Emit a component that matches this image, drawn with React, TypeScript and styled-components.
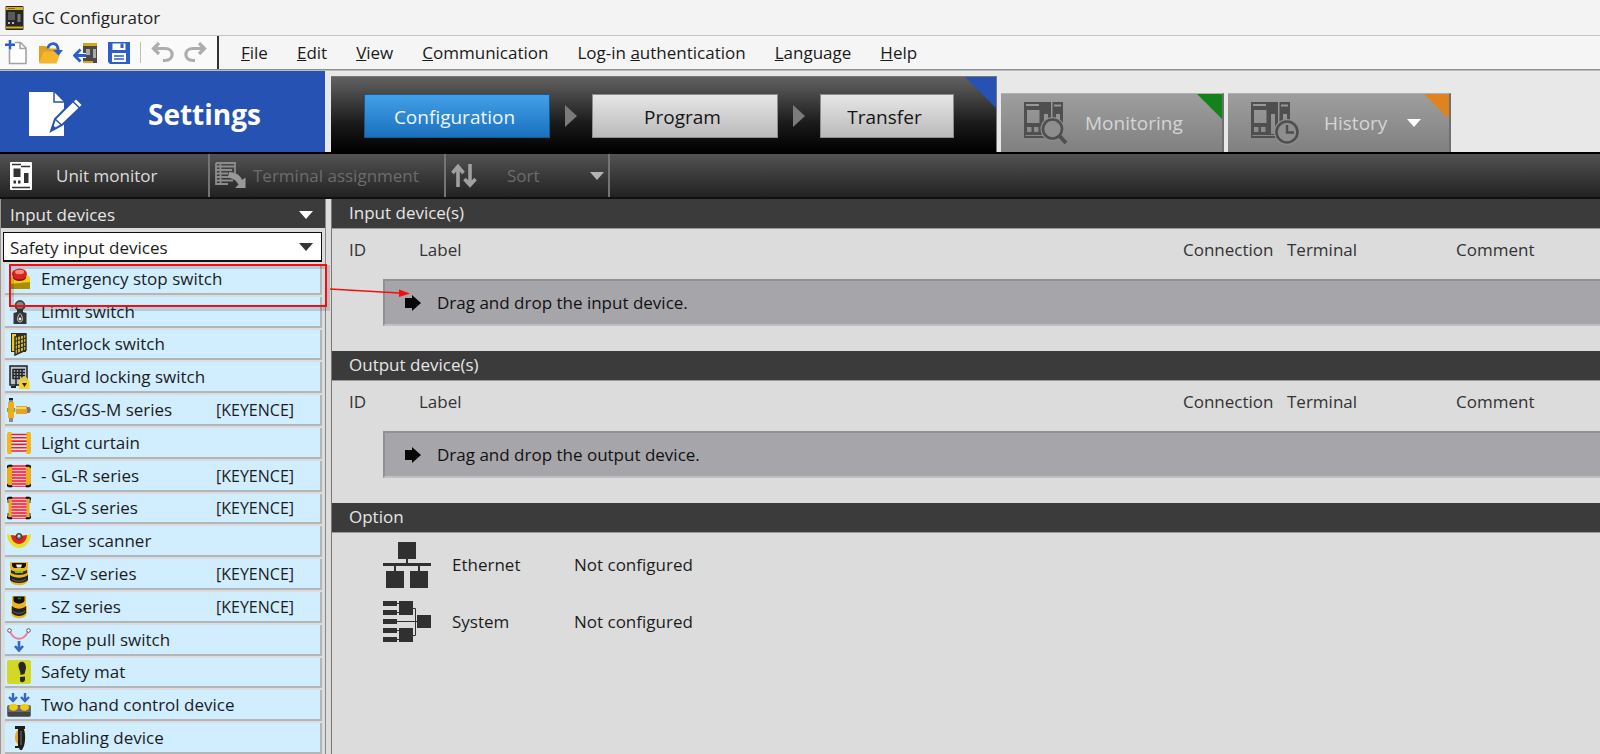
import React from "react";
import styled, { createGlobalStyle } from "styled-components";

const GlobalStyle = createGlobalStyle`
  *, *::before, *::after { box-sizing: border-box; }
  body {
    margin: 0;
    background: #dcdcdc;
    color: #1c1c1c;
    font-family: "Open Sans", "Noto Sans", sans-serif;
    font-size: 17px;
    line-height: 24px;
  }
  button, select { font: inherit; color: inherit; margin: 0; border: 0; border-radius: 0; padding: 0; background: none; }
  svg { display: block; flex: none; }
  ul { list-style: none; margin: 0; padding: 0; }
  h1, h2 { margin: 0; font: inherit; }
`;

const Shell = styled.div`
  min-height: 100vh;
  display: flex;
  flex-direction: column;
`;

const TitleBar = styled.header`
  display: flex;
  align-items: center;
  gap: 8px;
  height: 35px;
  padding-left: 5px;
  background: #f3f3f3;
  color: #222;
`;

const MenuBar = styled.div`
  display: flex;
  height: 35px;
  background: #f5f5f5;
  border-top: 1px solid #c4c4c4;
  border-bottom: 1px solid #8e8e8e;
`;

const QuickTools = styled.div`
  display: flex;
  align-items: center;
  width: 219px;
  padding-left: 5px;
  gap: 10px;
  border-right: 2px solid #333;
  background: #fafafa;
`;

const QuickDivider = styled.span`
  width: 1px;
  height: 21px;
  background: #bdbdbd;
`;

const Menu = styled.nav`
  display: flex;
  align-items: center;
  gap: 29px;
  padding-left: 22px;
  color: #1a1a1a;
`;

const Header = styled.div`
  display: flex;
  align-items: flex-end;
  height: 84px;
  background: #e8e8e8;
  border-top: 1px solid #bbb;
  border-bottom: 2px solid #000;
`;

const ModeTitle = styled.h1`
  display: flex;
  align-items: center;
  gap: 64px;
  align-self: stretch;
  width: 325px;
  padding: 4px 0 0 29px;
  background: #2652b3;
  color: #fff;
  font-size: 28px;
  font-weight: 700;
`;

const corner = (color: string, size: number) => `
  &::after {
    content: "";
    position: absolute;
    top: 0;
    right: 0;
    width: ${size}px;
    height: ${size}px;
    background: ${color};
    clip-path: polygon(0 0, 100% 0, 100% 100%);
  }
`;

const Steps = styled.nav`
  position: relative;
  display: flex;
  align-items: center;
  gap: 15px;
  height: 76px;
  width: 666px;
  margin-left: 6px;
  padding: 3px 0 0 33px;
  background: linear-gradient(#626262, #1a1a1a 62%, #000);
  border-right: 1px solid #777;
  border-top: 1px solid #777;
  ${corner("#2652b3", 31)}
`;

const StepButton = styled.button<{ $active?: boolean; $width: number }>`
  width: ${(p) => p.$width}px;
  height: 44px;
  padding: 2px 5px 0 0;
  border: 1px solid ${(p) => (p.$active ? "#17598f" : "#8d8d8d")};
  background: ${(p) => (p.$active ? "linear-gradient(#43a0e8, #1a70bd)" : "linear-gradient(#e6e6e6, #bababa)")};
  color: ${(p) => (p.$active ? "#eef6fd" : "#151515")};
  font-size: 19px;
`;

const ModeTab = styled.button<{ $color: string }>`
  position: relative;
  display: flex;
  align-items: center;
  height: 59px;
  width: 223px;
  margin-left: 4px;
  padding-left: 23px;
  background: linear-gradient(#9e9e9e, #808080);
  border-right: 2px solid #6f6f6f;
  border-top: 1px solid #b0b0b0;
  color: #d2d6d8;
  font-size: 19px;
  ${(p) => corner(p.$color, 25)}
`;

const TabLabel = styled.span<{ $indent: number }>`
  margin-left: ${(p) => p.$indent}px;
  margin-right: 20px;
`;

const ToolBar = styled.div`
  display: flex;
  height: 45px;
  background: linear-gradient(#525252, #222);
  border-bottom: 2px solid #111;
`;

const ToolButton = styled.button<{ $width: number; $gap: number }>`
  display: flex;
  align-items: center;
  gap: ${(p) => p.$gap}px;
  width: ${(p) => p.$width}px;
  padding: 0 4px 0 5px;
  border-right: 2px solid #747474;
  color: #dcdcdc;
  &:first-child { padding-left: 10px; }
  &:disabled { color: #6c6c6c; }
`;

const ToolLabel = styled.span`
  flex: 1;
  text-align: left;
`;

const Workspace = styled.div`
  flex: 1;
  display: flex;
`;

const DevicePanel = styled.aside`
  display: flex;
  flex-direction: column;
  width: 326px;
  border-right: 1px solid #888;
  border-left: 1px solid #999;
`;

const PanelHeader = styled.button`
  display: flex;
  align-items: center;
  justify-content: space-between;
  height: 29px;
  padding: 2px 12px 0 9px;
  background: #3b3b3b;
  color: #e6e6e6;
`;

const CategoryField = styled.label`
  position: relative;
  display: block;
  margin: 4px 3px 0 2px;
  svg { position: absolute; right: 9px; top: 11px; pointer-events: none; }
`;

const CategorySelect = styled.select`
  display: block;
  appearance: none;
  width: 100%;
  height: 30px;
  padding: 2px 28px 0 6px;
  border: 1px solid #111;
  border-bottom-width: 2px;
  background: #fff;
  color: #1c1c1c;
`;

const DeviceList = styled.ul`
  flex: 1;
  display: grid;
  grid-auto-rows: minmax(32px, 1fr);
  margin: 0 3px 0 4px;
`;

const DeviceItem = styled.li`
  position: relative;
  display: flex;
  align-items: stretch;
  padding-top: 2px;
`;

const DeviceButton = styled.button`
  flex: 1;
  display: grid;
  grid-template-columns: 24px 174px 1fr;
  column-gap: 10px;
  align-items: center;
  padding: 1px 0 0 2px;
  background: #d0eeff;
  border-right: 2px solid #b0b6ba;
  border-bottom: 2px solid #b0b6ba;
  text-align: left;
  white-space: nowrap;
`;

const Maker = styled.span`
  font-size: 16px;
  margin-left: -9px;
`;

const Callout = styled.svg`
  position: absolute;
  left: 0;
  top: 0;
  z-index: 2;
  pointer-events: none;
`;

const Main = styled.main`
  flex: 1;
  margin-left: 5px;
  border-left: 1px solid #777;
  background: #dcdcdc;
`;

const SectionTitle = styled.h2`
  height: 30px;
  padding: 2px 0 0 17px;
  background: #3b3b3b;
  border-bottom: 1px solid #999;
  color: #e6e6e6;
`;

const DeviceTable = styled.table`
  width: 100%;
  table-layout: fixed;
  border-collapse: collapse;
  margin-bottom: 25px;
  th { height: 50px; padding: 0 0 8px; font-weight: 400; text-align: left; color: #333; }
  th:first-child { padding-left: 17px; }
  td { padding: 0 0 0 51px; }
`;

const DropZone = styled.div`
  display: flex;
  align-items: center;
  gap: 16px;
  height: 47px;
  padding-left: 20px;
  background: #a6a5aa;
  border-top: 2px solid #919195;
  border-left: 2px solid #919195;
  border-bottom: 2px solid #c0c0c2;
  color: #111;
`;

const OptionList = styled.ul`
  padding: 3px 0 0 51px;
`;

const OptionItem = styled.li`
  display: grid;
  grid-template-columns: 48px 101px 1fr;
  column-gap: 21px;
  align-items: center;
  height: 57px;
`;

const Down = ({ color, w = 14, h = 8 }: { color: string; w?: number; h?: number }) => (
  <svg width={w} height={h} viewBox="0 0 14 8" aria-hidden="true"><path d="M0 0H14L7 8Z" fill={color} /></svg>
);

const StepArrow = () => (
  <svg width="12" height="22" viewBox="0 0 12 22" aria-hidden="true"><path d="M0 0L12 11L0 22Z" fill="#7b7b7b" /></svg>
);

const AppIcon = () => (
  <svg width="19" height="24" viewBox="0 0 19 24" aria-hidden="true">
    <rect x=".5" width="18" height="24" rx="1" fill="#262626" />
    <path d="M1 1H18V4H1ZM1 20.500H18V22.500H1Z" fill="#d4b01c" />
    <path d="M3 2.500H10" stroke="#7a6a20" />
    <rect x="3" y="6" width="7" height="8" fill="#5a5a5a" />
    <rect x="12.500" y="8" width="3" height="8" fill="#777" />
    <path d="M3 17H5M7 17H9" stroke="#bbb" strokeWidth="2" />
  </svg>
);

const NewIcon = () => (
  <svg width="23" height="25" viewBox="0 0 23 25" fill="none" aria-hidden="true">
    <path d="M4.500 10V23.500H21V8L15.500 2.500H10M15 3V8.500H21" stroke="#a3a3a3" strokeWidth="1.600" fill="#fff" />
    <path d="M5 0V9.500M0 4.800H10" stroke="#2a5fcb" strokeWidth="2.600" />
  </svg>
);

const OpenIcon = () => (
  <svg width="25" height="22" viewBox="0 0 25 22" fill="none" aria-hidden="true">
    <path d="M1 4H8L10 6.500H20V10H6L2 20H1Z" fill="#e3a01d" />
    <path d="M6 9.500H23L18.500 21.500H1Z" fill="#f3b62c" />
    <path d="M10 6.500C10.500 .5 20 -1.500 20.300 9" stroke="#2a5fcb" strokeWidth="2.800" />
    <path d="M15 8L20.500 13.500L25 8Z" fill="#2a5fcb" />
  </svg>
);

const ReadIcon = () => (
  <svg width="25" height="22" viewBox="0 0 25 22" fill="none" aria-hidden="true">
    <rect x="10" y="1" width="14" height="20" fill="#4a4a4a" />
    <path d="M10 1H24V4H10ZM10 19H20V21H10Z" fill="#d6a81c" />
    <path d="M13 7H17V13H13ZM20 7H23V16H20Z" fill="#aaa" />
    <path d="M2 13.500H13" stroke="#fff" strokeWidth="5" />
    <path d="M2 13.500H13M7.500 7.500L1.500 13.500L7.500 19.500" stroke="#2a5fcb" strokeWidth="2.800" />
  </svg>
);

const SaveIcon = () => (
  <svg width="22" height="22" viewBox="0 0 22 22" aria-hidden="true">
    <path d="M0 0H22V22H2L0 20Z" fill="#2c5fc9" />
    <path d="M4.500 1.500H17.500V8H4.500ZM4 11H18V20H4Z" fill="#fff" />
    <path d="M12.500 1.500H15.500V6H12.500Z" fill="#2c5fc9" />
    <path d="M6 14H16M6 17H16" stroke="#2c5fc9" strokeWidth="1.500" />
  </svg>
);

const UndoIcon = ({ flip }: { flip?: boolean }) => (
  <svg width="23" height="21" viewBox="0 0 23 21" fill="none" aria-hidden="true">
    <g transform={flip ? "matrix(-1 0 0 1 23 0)" : undefined} stroke="#adadad" strokeWidth="3.200">
      <path d="M8 1L2.500 6.500L8 12M3 6.500H14C23.500 6.500 23.500 18.500 14 18.500H12" />
    </g>
  </svg>
);

const SettingsIcon = () => (
  <svg width="55" height="44" viewBox="0 0 55 44" aria-hidden="true">
    <path d="M0 0H25L35 10V44H0Z" fill="#fff" />
    <path d="M25 0V10H35" fill="none" stroke="#2652b3" strokeWidth="1.500" />
    <path d="M22 39L26 27L47 6L54 13L33 33Z" fill="#fff" stroke="#2652b3" strokeWidth="2" />
    <path d="M44 9.500L50.500 16M26 27L33 33.500" stroke="#2652b3" strokeWidth="1.500" />
    <path d="M22 39L24 33L27.500 36.500Z" fill="#2652b3" />
  </svg>
);

const UnitIcon = () => (
  <svg width="22" height="28" viewBox="0 0 22 28" aria-hidden="true">
    <rect width="22" height="28" rx="1" fill="#fff" />
    <path d="M2 2.500H11M2 25.500H20" stroke="#333" strokeWidth="1.500" />
    <path d="M3.500 6.500H10.500V15H3.500ZM14 11H18.500V21H14ZM3.500 18.500H6V21.500H3.500ZM8 18.500H10.500V21.500H8Z" fill="#333" />
    <path d="M11 4.500H20" stroke="#333" strokeWidth="1.500" />
  </svg>
);

const TerminalIcon = () => (
  <svg width="31" height="27" viewBox="0 0 31 27" fill="none" aria-hidden="true">
    <path d="M1 1H20V11M1 1V22H13M5.500 1V22M1 4.500H20M1 8H17M1 11.500H13M1 15H14M1 18.500H18" stroke="#8c8c8c" strokeWidth="1.800" />
    <path d="M14 10C21 10 26 14 27 18L30.500 15.500V26H20L23.500 22.500C21 18 18 16.500 13 15.500Z" fill="#999" />
  </svg>
);

const SortIcon = () => (
  <svg width="26" height="24" viewBox="0 0 26 24" fill="none" stroke="#a0a0a0" strokeWidth="3.600" aria-hidden="true">
    <path d="M7 23V3M1.500 9L7 2.500L12.500 9M19 0V20M13.500 15L19 21L24.500 15" />
  </svg>
);

const ModuleShape = () => (
  <path fillRule="evenodd" d="M0 0H27V36H0ZM28.500 0H39V26H28.500ZM2 2V4H15V2ZM3 8V21H15.500V8ZM3 25V30H7.500V25ZM10 25V30H14.500V25ZM20 12V32H24V12ZM30 2.500V4.500H37V2.500ZM32 12V22H36V12ZM1.500 33V34H24V33Z" fill="#4f4f4f" />
);

const MonitorIcon = () => (
  <svg width="44" height="43" viewBox="0 0 44 43" fill="none" aria-hidden="true">
    <ModuleShape />
    <circle cx="28.500" cy="27" r="12" fill="#8e8e8e" />
    <circle cx="28.500" cy="27" r="9.500" stroke="#4f4f4f" strokeWidth="2.600" />
    <path d="M35.500 34L42 41" stroke="#4f4f4f" strokeWidth="4" />
  </svg>
);

const HistoryIcon = () => (
  <svg width="49" height="43" viewBox="0 0 49 43" fill="none" aria-hidden="true">
    <ModuleShape />
    <circle cx="36" cy="30" r="13" fill="#8e8e8e" />
    <circle cx="36" cy="30" r="10.500" stroke="#4f4f4f" strokeWidth="2.600" />
    <path d="M36 23V30.500H43" stroke="#4f4f4f" strokeWidth="2.400" />
  </svg>
);

const DropArrow = () => (
  <svg width="16" height="16" viewBox="0 0 16 16" aria-hidden="true"><path d="M0 3H7V0L16 8L7 16V13H0Z" fill="#060606" /></svg>
);

const EthernetIcon = () => (
  <svg width="48" height="46" viewBox="0 0 48 46" fill="#303030" aria-hidden="true">
    <path d="M15 0H33V17H25V21H48V24H37V29H45V46H27V29H35V24H13V29H21V46H3V29H11V24H0V21H23V17H15Z" />
  </svg>
);

const SystemIcon = () => (
  <svg width="48" height="42" viewBox="0 0 48 42" aria-hidden="true">
    <path d="M0 0H14V5H0ZM0 9H14V14H0ZM0 18H14V23H0ZM0 27H14V32H0ZM0 36H14V41H0ZM16 0H30V14H16ZM16 27H30V41H16ZM34 14H48V27H34Z" fill="#303030" />
    <path d="M14 2.500H16M14 11.500H16M14 20.500H34M14 29.500H16M14 38.500H16M30 7.500H32.500V34.500H30" fill="none" stroke="#303030" />
  </svg>
);

const LightCurtain = () => (
  <>
    <path d="M4 3H20V21H4Z" fill="#fdeef2" />
    <path d="M4 3.500H20M4 6.800H20M4 10.100H20M4 13.400H20M4 16.700H20M4 20H20" stroke="#ec1c2a" strokeWidth="1.600" />
    <path d="M1 1H4.500V23H1L0 21V3ZM23 1H19.500V23H23L24 21V3Z" fill="#f7b519" />
  </>
);

const SeriesCurtain = ({ slim }: { slim?: boolean }) => (
  <>
    <path d="M4 1H20V23H4Z" fill="#f04452" />
    <path d="M4 3.500H20M4 6.500H20M4 9.500H20M4 12.500H20M4 15.500H20M4 18.500H20M4 21.500H20" stroke="#f9bcc6" strokeWidth="1.200" />
    <path d={slim ? "M1.500 2H4.500V22H1.500ZM19.500 2H22.500V22H19.500Z" : "M0 2H5V22H0ZM19 2H24V22H19Z"} fill="#f2ab18" />
    <path d="M0 4V2L2 1H5V2.500H2ZM24 4V2L22 1H19V2.500H22ZM0 20V22L2 23H5V21.500H2ZM24 20V22L22 23H19V21.500H22Z" fill="#111" stroke="#111" strokeWidth=".6" />
    {slim && <path d="M1 4V7M23 4V7M1 17V20M23 17V20" stroke="#333" />}
  </>
);

const icons: Record<string, React.ReactNode> = {
  stop: (
    <>
      <path d="M4 10L7 8H20L23 10V22H3V14Z" fill="#f1cf10" />
      <path d="M3 17L23 15V22H3Z" fill="#a98f08" />
      <ellipse cx="12.500" cy="10.500" rx="6.500" ry="3.500" fill="#7e1212" />
      <ellipse cx="12.500" cy="7" rx="7.500" ry="5.500" fill="#dd231d" />
      <ellipse cx="12.500" cy="5" rx="4.500" ry="2.200" fill="#f58a80" />
    </>
  ),
  limit: (
    <>
      <circle cx="13" cy="5.500" r="4.500" fill="#888" stroke="#444" strokeWidth="1.800" />
      <path d="M10 9H16V12L19.500 13V24H6.500V13L10 12Z" fill="#353535" />
      <path d="M13 13.500C16 16 16.500 22 13 22C9.500 22 10 16 13 13.500" fill="none" stroke="#ccc" />
      <circle cx="13" cy="19" r="1.400" fill="#eee" />
    </>
  ),
  interlock: (
    <>
      <path d="M4 1H19V20H4Z" fill="#2e2e2e" />
      <path d="M5 2H9V19H5Z" fill="#f2c81b" />
      <path d="M8 5L19 2V18L8 23Z" fill="#f2c81b" stroke="#2e2e2e" strokeWidth="1.500" />
      <path d="M10.500 4V22M13.500 3V21M16.500 2V20M8 9.500L19 6M8 13.500L19 10M8 17.500L19 14" stroke="#2e2e2e" strokeWidth="1.300" />
    </>
  ),
  guard: (
    <>
      <path d="M3 1H20V20H3Z" fill="#b8c4ca" stroke="#222" strokeWidth="1.500" />
      <path d="M6 4V14M9 4V21M12 4V14M15 4V13M6 4.500H18M6 7.500H18M6 10.500H18M6 13.500H13" stroke="#222" strokeWidth="1.500" />
      <path d="M4 22H9" stroke="#222" strokeWidth="2" />
      <path d="M14.500 16C14.500 11.500 20 11.500 20 16" fill="none" stroke="#f2c81b" strokeWidth="2" />
      <rect x="12" y="15.500" width="10.500" height="8.500" fill="#f7d21e" />
      <path d="M15 18H20L17.500 22Z" fill="#222" />
    </>
  ),
  gs: (
    <>
      <path d="M1 4H7V20H1Z" fill="#f3ad1c" />
      <path d="M2 0H6V4H2ZM2 20H6V24H2Z" fill="#8c8c8c" />
      <path d="M2 1H6" stroke="#222" strokeWidth="2" />
      <path d="M.500 10V14M7.500 10V14" stroke="#63b82c" strokeWidth="1.500" />
      <path d="M9 8H20V16H9Z" fill="#e7a51c" />
      <path d="M9 10H19" stroke="#f6d27a" strokeWidth="2" />
      <path d="M20 9H22.500L24 12L22.500 15H20Z" fill="#777" />
    </>
  ),
  curtain: <LightCurtain />,
  glr: <SeriesCurtain />,
  gls: <SeriesCurtain slim />,
  laser: (
    <>
      <path d="M0 5C5 7 19 7 24 5C24 13 18 19 12 19C6 19 0 13 0 5Z" fill="#e6e02c" />
      <path d="M4 6C8 7 16 7 20 6C20 11 16 15 12 15C8 15 4 11 4 6Z" fill="#e0231d" />
      <circle cx="12" cy="7.500" r="3" fill="#777" stroke="#333" />
      <circle cx="12" cy="7" r="1.200" fill="#ddd" />
    </>
  ),
  szv: (
    <>
      <path d="M3 0H21V6L20 8H21V18C20 25 4 25 3 18V8H4L3 6Z" fill="#f0b41c" />
      <path d="M5 1H19V4L17 6H7L5 4Z" fill="#111" />
      <path d="M9 2.500H15L14 5.500H10Z" fill="#f4f4f4" />
      <path d="M4 8C8 10.500 16 10.500 20 8V11C16 13.500 8 13.500 4 11Z" fill="#2b2b1b" />
      <path d="M8 10H16" stroke="#6cc52f" strokeWidth="2" />
      <path d="M3 13C8 16.500 16 16.500 21 13V18C18 22 6 22 3 18Z" fill="#222" />
      <path d="M5 17C9 20 15 20 19 17" stroke="#666" fill="none" />
    </>
  ),
  sz: (
    <>
      <path d="M5 1H19V8L18.500 11H20V18C19 25 5 25 4 18V11H5.500L5 8Z" fill="#f0b41c" />
      <path d="M6.500 1.500H17.500V6C15 9.500 9 9.500 6.500 6Z" fill="#111" />
      <path d="M11 3.500H14" stroke="#1f8a2a" strokeWidth="1.500" />
      <path d="M5 11C9 14.500 15 14.500 19 11V18C16 22 8 22 5 18Z" fill="#222" />
      <path d="M6 16C9 19 15 19 18 16" stroke="#666" fill="none" />
    </>
  ),
  rope: (
    <>
      <path d="M3 4C8 13 16 13 21 4" fill="none" stroke="#f47c8c" strokeWidth="1.800" />
      <circle cx="2.500" cy="2.500" r="1.800" fill="#fff" stroke="#555" />
      <circle cx="21.500" cy="2.500" r="1.800" fill="#fff" stroke="#555" />
      <path d="M12 13V22M8 18L12 22.500L16 18" fill="none" stroke="#3767c4" strokeWidth="2.600" />
    </>
  ),
  mat: (
    <>
      <rect width="24" height="24" rx="2" fill="#d2d824" />
      <path d="M12 3C16 0 19 3 19 8L17.500 14L13.500 15C14 11 10 7 12 3ZM13 17L18 16.500V20C17 23 13 23 13 20Z" fill="#262626" />
    </>
  ),
  hands: (
    <>
      <rect y="12" width="24" height="12" rx="2" fill="#6a6a6a" />
      <path d="M1 21H23" stroke="#444" strokeWidth="4" />
      <path d="M2 14C2 9.500 11 9.500 11 14C11 19 2 19 2 14ZM13 14C13 9.500 22 9.500 22 14C22 19 13 19 13 14Z" fill="#efcb12" />
      <path d="M6 0V7M2 4L6 8L10 4M18 0V7M14 4L18 8L22 4" fill="none" stroke="#3767c4" strokeWidth="2.400" />
    </>
  ),
  enabling: (
    <>
      <path d="M8 0H18V3H17C18.500 8 18.500 15 17 20L15 24H13L12 22H8V20H11V3H8Z" fill="#1d1d1d" />
      <path d="M11 4V18C7 17 7 6 11 4Z" fill="#efa51c" />
      <path d="M14 5V19" stroke="#777" />
    </>
  ),
};

const devices = [
  { icon: "stop", name: "Emergency stop switch" },
  { icon: "limit", name: "Limit switch" },
  { icon: "interlock", name: "Interlock switch" },
  { icon: "guard", name: "Guard locking switch" },
  { icon: "gs", name: "- GS/GS-M series", maker: "[KEYENCE]" },
  { icon: "curtain", name: "Light curtain" },
  { icon: "glr", name: "- GL-R series", maker: "[KEYENCE]" },
  { icon: "gls", name: "- GL-S series", maker: "[KEYENCE]" },
  { icon: "laser", name: "Laser scanner" },
  { icon: "szv", name: "- SZ-V series", maker: "[KEYENCE]" },
  { icon: "sz", name: "- SZ series", maker: "[KEYENCE]" },
  { icon: "rope", name: "Rope pull switch" },
  { icon: "mat", name: "Safety mat" },
  { icon: "hands", name: "Two hand control device" },
  { icon: "enabling", name: "Enabling device" },
];

const menus = [
  ["", "F", "ile"],
  ["", "E", "dit"],
  ["", "V", "iew"],
  ["", "C", "ommunication"],
  ["Log-in ", "a", "uthentication"],
  ["", "L", "anguage"],
  ["", "H", "elp"],
];

const DragCallout = () => (
  <Callout width="412" height="56" viewBox="0 0 412 56" fill="none" aria-hidden="true">
    <rect x="7" y="5" width="316" height="42" stroke="#000" strokeOpacity=".14" strokeWidth="4" />
    <rect x="5" y="3" width="316" height="41" stroke="#f80d0d" strokeWidth="2" />
    <path d="M325 27L394 31" stroke="#f80d0d" strokeWidth="1.500" />
    <path d="M394 27.500L405 31.500L394 35Z" fill="#f80d0d" />
  </Callout>
);

const DeviceSection = ({ title, hint }: { title: string; hint: string }) => (
  <section>
    <SectionTitle>{title}</SectionTitle>
    <DeviceTable>
      <colgroup>
        <col style={{ width: 87 }} />
        <col />
        <col style={{ width: 104 }} />
        <col style={{ width: 169 }} />
        <col style={{ width: 144 }} />
      </colgroup>
      <thead>
        <tr>
          <th>ID</th>
          <th>Label</th>
          <th>Connection</th>
          <th>Terminal</th>
          <th>Comment</th>
        </tr>
      </thead>
      <tbody>
        <tr>
          <td colSpan={5}>
            <DropZone><DropArrow />{hint}</DropZone>
          </td>
        </tr>
      </tbody>
    </DeviceTable>
  </section>
);

export default function App() {
  return (
    <Shell>
      <GlobalStyle />
      <TitleBar><AppIcon />GC Configurator</TitleBar>
      <MenuBar>
        <QuickTools>
          <button aria-label="New"><NewIcon /></button>
          <button aria-label="Open"><OpenIcon /></button>
          <button aria-label="Read from unit"><ReadIcon /></button>
          <button aria-label="Save"><SaveIcon /></button>
          <QuickDivider />
          <button aria-label="Undo"><UndoIcon /></button>
          <button aria-label="Redo"><UndoIcon flip /></button>
        </QuickTools>
        <Menu>
          {menus.map(([before, key, after]) => (
            <button key={key + after}>{before}<u>{key}</u>{after}</button>
          ))}
        </Menu>
      </MenuBar>
      <Header>
        <ModeTitle><SettingsIcon />Settings</ModeTitle>
        <Steps>
          <StepButton $active $width={186}>Configuration</StepButton>
          <StepArrow />
          <StepButton $width={186}>Program</StepButton>
          <StepArrow />
          <StepButton $width={134}>Transfer</StepButton>
        </Steps>
        <ModeTab $color="#14821a"><MonitorIcon /><TabLabel $indent={17}>Monitoring</TabLabel></ModeTab>
        <ModeTab $color="#dd8420"><HistoryIcon /><TabLabel $indent={24}>History</TabLabel><Down color="#fff" /></ModeTab>
      </Header>
      <ToolBar>
        <ToolButton $width={210} $gap={24}><UnitIcon /><ToolLabel>Unit monitor</ToolLabel></ToolButton>
        <ToolButton $width={236} $gap={7} disabled><TerminalIcon /><ToolLabel>Terminal assignment</ToolLabel></ToolButton>
        <ToolButton $width={164} $gap={30} disabled><SortIcon /><ToolLabel>Sort</ToolLabel><Down color="#b4b4b4" /></ToolButton>
      </ToolBar>
      <Workspace>
        <DevicePanel>
          <PanelHeader>Input devices<Down color="#fff" /></PanelHeader>
          <CategoryField>
            <CategorySelect aria-label="Device category">
              <option>Safety input devices</option>
            </CategorySelect>
            <Down color="#333" />
          </CategoryField>
          <DeviceList>
            {devices.map((d, i) => (
              <DeviceItem key={d.name}>
                <DeviceButton>
                  <svg width="24" height="24" viewBox="0 0 24 24" aria-hidden="true">{icons[d.icon]}</svg>
                  <span>{d.name}</span>
                  {d.maker && <Maker>{d.maker}</Maker>}
                </DeviceButton>
                {i === 0 && <DragCallout />}
              </DeviceItem>
            ))}
          </DeviceList>
        </DevicePanel>
        <Main>
          <DeviceSection title="Input device(s)" hint="Drag and drop the input device." />
          <DeviceSection title="Output device(s)" hint="Drag and drop the output device." />
          <section>
            <SectionTitle>Option</SectionTitle>
            <OptionList>
              <OptionItem><EthernetIcon /><span>Ethernet</span><span>Not configured</span></OptionItem>
              <OptionItem><SystemIcon /><span>System</span><span>Not configured</span></OptionItem>
            </OptionList>
          </section>
        </Main>
      </Workspace>
    </Shell>
  );
}
